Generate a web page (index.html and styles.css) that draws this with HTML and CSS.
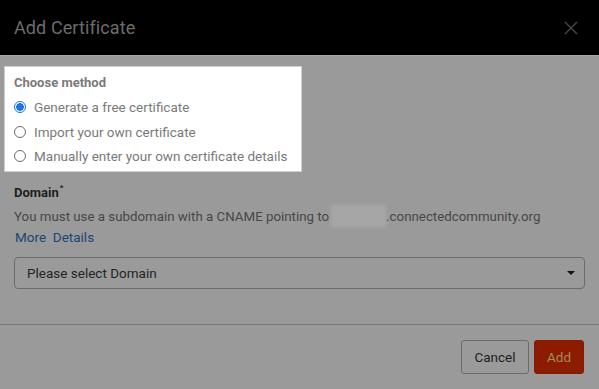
FILE: index.html
```html
<!DOCTYPE html>
<html>
<head>
    <title>Add Certificate</title>
    <link rel="stylesheet" href="styles.css">
</head>
<body>
    <div class="modal">
        <div class="modal-header">
            <h2 class="modal-title">Add Certificate</h2>
            <svg class="close" width="14" height="14" viewBox="0 0 14 14">
                <path d="M1 1L13 13M13 1L1 13" stroke="#4a4a4a" stroke-width="1.3" fill="none"/>
            </svg>
        </div>

        <div class="modal-body">
            <div class="spotlight">
                <div class="group-label">Choose method</div>
                <label class="radio-row">
                    <span class="radio checked"></span>
                    Generate a free certificate
                </label>
                <label class="radio-row">
                    <span class="radio"></span>
                    Import your own certificate
                </label>
                <label class="radio-row">
                    <span class="radio"></span>
                    Manually enter your own certificate details
                </label>
            </div>

            <div class="field">
                <div class="field-label">Domain<sup>*</sup></div>
                <p class="help">You must use a subdomain with a CNAME pointing to<span class="blurred"></span>.connectedcommunity.org</p>
                <a class="more-link">More&nbsp; Details</a>
                <div class="select">
                    <span>Please select Domain</span>
                    <span class="caret"></span>
                </div>
            </div>
        </div>

        <div class="modal-footer">
            <button class="btn btn-cancel">Cancel</button>
            <button class="btn btn-add">Add</button>
        </div>
    </div>
</body>
</html>
```

FILE: styles.css
```css
body {
    margin: 0;
    background: #9a9a9a;
    font-family: 'Roboto', 'Liberation Sans', sans-serif;
    font-size: 14px;
    color: #4a4a4a;
    height: 389px;
    overflow: hidden;
}

.modal {
    width: 599px;
}

.modal-header {
    height: 56px;
    background: #000;
    border-bottom: 1px solid #a8a8a8;
    display: flex;
    align-items: center;
    justify-content: space-between;
    padding: 0 21px 0 14px;
    box-sizing: border-box;
}

.modal-title {
    margin: 0;
    font-size: 18px;
    font-weight: 400;
    color: #6c6c6c;
    letter-spacing: 0.1px;
}

.modal-body {
    padding: 11px 14px 35px 14px;
    border-bottom: 1px solid #7a7a7a;
}

.spotlight {
    background: #fff;
    width: 296px;
    height: 104px;
    margin-left: -9px;
    padding: 7px 0 0 9px;
    box-sizing: border-box;
    box-shadow: 0 0 0 1px #cfcfcf;
    color: #7a7a7a;
}

.group-label {
    font-weight: 700;
    font-size: 13px;
    line-height: 18px;
    color: #7a7a7a;
    margin-bottom: 3px;
}

.radio-row {
    display: flex;
    align-items: center;
    gap: 8px;
    height: 24.5px;
    font-size: 13.5px;
}

.radio {
    width: 12px;
    height: 12px;
    border: 1px solid #6a6a6a;
    border-radius: 50%;
    box-sizing: border-box;
    flex-shrink: 0;
}

.radio.checked {
    border: 1px solid #1a73e8;
    background: radial-gradient(circle, #1a73e8 0 3.6px, #fff 4px);
}

.field {
    margin-top: 8px;
}

.field-label {
    font-weight: 700;
    font-size: 13px;
    color: #1e1e1e;
    line-height: 18px;
}

.field-label sup {
    font-size: 8px;
    vertical-align: 7px;
    margin-left: 1px;
}

.help {
    margin: 4px 0 0;
    height: 20px;
    font-size: 13.3px;
    color: #474747;
    display: flex;
    align-items: center;
}

.blurred {
    display: inline-block;
    width: 55px;
    height: 22px;
    margin-left: 2px;
    background: #a6a6a6;
    filter: blur(1.5px);
}

.more-link {
    display: block;
    margin: 1px 0 0 1px;
    line-height: 20px;
    font-size: 13.5px;
    color: #1c4672;
}

.select {
    margin-top: 10px;
    height: 32px;
    border: 1px solid #6c6c6c;
    border-radius: 4px;
    box-sizing: border-box;
    display: flex;
    align-items: center;
    justify-content: space-between;
    padding: 0 9px 0 12px;
    color: #242424;
    font-size: 13.5px;
}

.caret {
    width: 0;
    height: 0;
    border-left: 4px solid transparent;
    border-right: 4px solid transparent;
    border-top: 4px solid #111;
}

.modal-footer {
    display: flex;
    justify-content: flex-end;
    gap: 5px;
    padding: 15px 15px 0;
}

.btn {
    height: 34px;
    border-radius: 3px;
    font-family: inherit;
    font-size: 13.5px;
    padding: 0 12px;
    cursor: pointer;
}

.btn-cancel {
    background: transparent;
    border: 1px solid #6c6c6c;
    color: #1e1e1e;
    width: 68px;
}

.btn-add {
    background: #8c1c00;
    border: 1px solid #841a00;
    color: #a58a5e;
    width: 50px;
}
```
